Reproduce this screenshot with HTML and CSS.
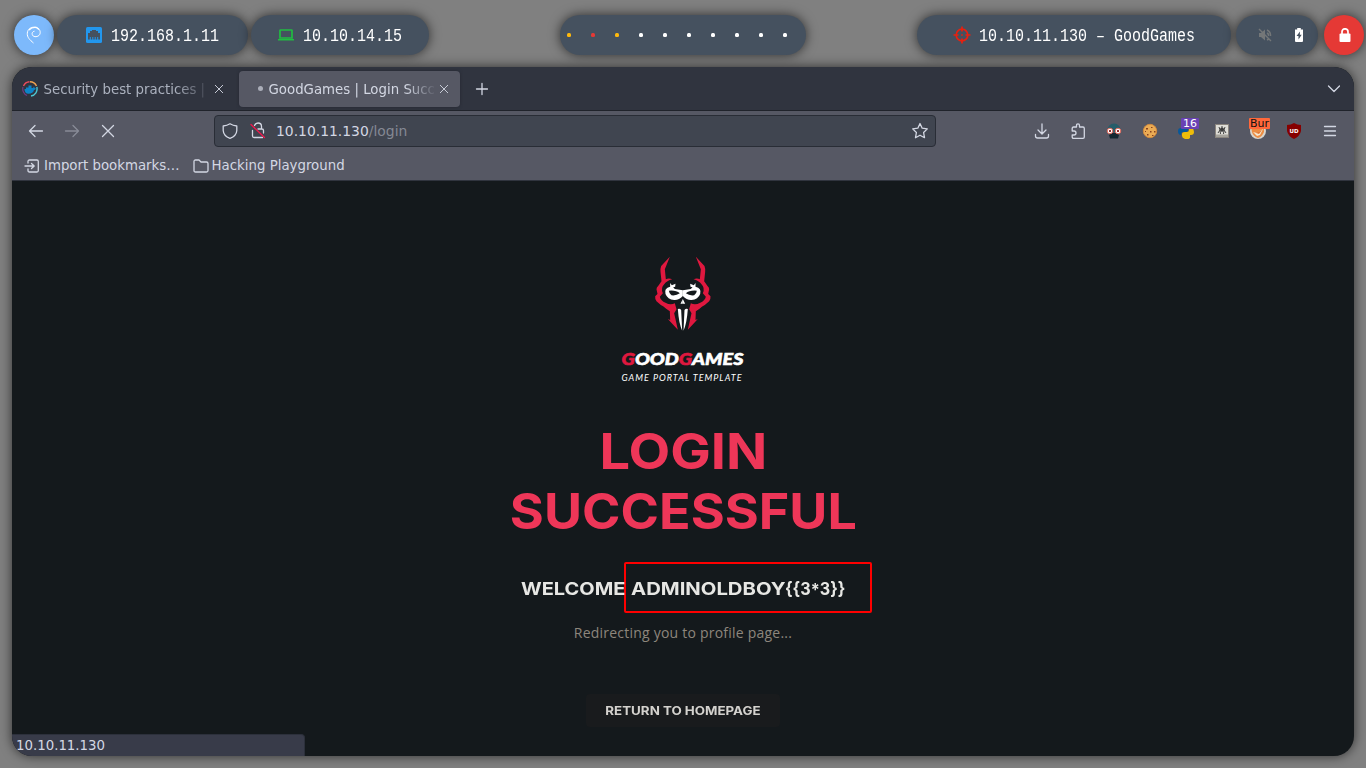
FILE: index.html
```html
<!DOCTYPE html>
<html lang="en">
<head>
<meta charset="utf-8">
<title>GoodGames | Login Successful</title>
<link rel="stylesheet" href="styles.css">
</head>
<body>
<header class="bar">
  <div class="pill debian"><svg width="16" height="18" viewBox="0 0 16 18" fill="none" stroke="#fff"><path d="M7.500 17C4 14 1 11.500 1.300 7.200C1.600 3 5 1 8.300 1.200C12.500 1.200 15 4.500 14 7.800C13.300 10.500 9.200 11.500 7.200 10C5.300 8.300 6 5.500 8.500 5.200" stroke-width="1"/><path d="M3 4Q6 .8 10.500 1.500L13 3.500" stroke-width="1.300"/></svg></div>
  <div class="pill lan"><svg width="16" height="16" viewBox="0 0 16 16"><rect width="16" height="16" rx="1.500" fill="#2297ee"/><path d="M2 12.500V6H4V4H6V3H10V4H12V6H14V12.500H12.200V10H11.200V12.500H9.700V10H8.700V12.500H7.300V10H6.300V12.500H4.800V10H3.800V12.500Z" fill="#45515f"/></svg><span class="mono">192.168.1.11</span></div>
  <div class="pill vpn"><svg width="16" height="12" viewBox="0 0 16 12"><path d="M2 9V1.500Q2 1 2.500 1H13.500Q14 1 14 1.500V9Z" fill="none" stroke="#20bd41" stroke-width="1.700"/><path d="M0 10H16V11.500H0Z" fill="#20bd41"/></svg><span class="mono">10.10.14.15</span></div>
  <div class="pill spaces"><i class="y"></i><i class="r"></i><i class="y"></i><i></i><i></i><i></i><i></i><i></i><i></i><i></i></div>
  <div class="pill goal"><svg width="18" height="18" viewBox="0 0 18 18" fill="none" stroke="#e8200f" stroke-width="1.700"><circle cx="9" cy="9" r="5.800"/><path d="M9 .5V5.500M9 12.500V17.500M.5 9H5.500M12.500 9H17.500M8.200 9H9.800"/></svg><span class="mono">10.10.11.130 – GoodGames</span></div>
  <div class="pill power"><svg width="14" height="14" viewBox="0 0 14 14"><path d="M1 5H3L7 1.500V12.500L3 9H1Z" fill="#747778"/><path d="M1 1L13 13M9 2Q13 4 12.500 8M9 5Q11 6 10.500 8M9 12L11 11" stroke="#747778" stroke-width="1.400" fill="none"/></svg><svg width="8" height="14" viewBox="0 0 8 14"><path d="M0 1.500H2.200V0H5.800V1.500H8V13Q8 14 7 14H1Q0 14 0 13Z" fill="#fff"/><path d="M5 3.500L1.500 8H3.500V11.500L6.700 6.800H4.800Z" fill="#45515f"/></svg></div>
  <div class="pill lock"><svg width="12" height="14" viewBox="0 0 12 14"><rect y="5.500" x=".5" width="11" height="8.500" rx="1" fill="#fff"/><path d="M3 6V3.800a3 3 0 0 1 6 0V6" fill="none" stroke="#fff" stroke-width="1.700"/></svg></div>
</header>
<main class="window">
  <div class="tabs">
    <div class="tab first">
      <svg width="16" height="16" viewBox="0 0 16 16" fill="none"><path d="M5 14.500A7.200 7.200 0 0 1 1 6" stroke="#703a80" stroke-width="1.200"/><path d="M1.500 5A7.200 7.200 0 0 1 7.500 .8" stroke="#ed4c5c" stroke-width="1.400"/><path d="M8 .8A7.200 7.200 0 0 1 14.500 5" stroke="#efa150" stroke-width="1.400"/><path d="M14.800 6A7.200 7.200 0 0 1 9 15" stroke="#4dc7d3" stroke-width="1.400"/><path d="M2.500 8H4V6.500H6.500V4.500H9.500V7H11L12 5.500L12.700 7L14 7.500Q13 9 12 9Q11 12.800 6.500 12.800Q2.500 12.500 2.500 8Z" fill="#0c84c8"/></svg>
      <span class="label">Security best practices |</span><svg class="x" viewBox="0 0 10 10"><path d="M1 1L9 9M9 1L1 9"/></svg>
    </div>
    <div class="tab active"><i class="dot"></i><span class="label">GoodGames | Login Succ</span><svg class="x" viewBox="0 0 10 10"><path d="M1 1L9 9M9 1L1 9"/></svg></div>
    <svg class="line plus" width="14" height="14" viewBox="0 0 14 14"><path d="M7 1.500V12.500M1.500 7H12.500"/></svg>
    <svg class="line chevron" width="14" height="8" viewBox="0 0 14 8"><path d="M1.500 1L7 6.500L12.500 1"/></svg>
  </div>
  <div class="tools">
    <svg class="line back" width="16" height="14" viewBox="0 0 16 14"><path d="M14.500 7H1.500M7 1.500L1.500 7L7 12.500"/></svg>
    <svg class="line fwd" width="16" height="14" viewBox="0 0 16 14"><path d="M1.500 7H14.500M9 1.500L14.500 7L9 12.500"/></svg>
    <svg class="line stop" width="14" height="14" viewBox="0 0 14 14"><path d="M1.500 1.500L12.500 12.500M12.500 1.500L1.500 12.500"/></svg>
    <div class="url">
      <svg class="line" width="16" height="16" viewBox="0 0 16 16"><path d="M8 .8Q11 2.700 14.800 3V7.500Q14.500 13 8 15.300Q1.500 13 1.200 7.500V3Q5 2.700 8 .8Z"/></svg>
      <svg class="line insecure" width="16" height="17" viewBox="0 0 16 17"><path d="M4.500 3.500Q5.500 1 8 1Q11.500 1 11.500 4.500V7M8 7H12Q13.500 7 13.500 8.500V11M2.500 8.500V14Q2.500 15.500 4 15.500H12.500"/><path d="M1 2.500L14.500 15.500" stroke="#f4154b"/></svg>
      <span class="addr">10.10.11.130<span>/login</span></span>
      <svg class="line star" width="18" height="18" viewBox="0 0 18 18"><path d="M9 1.500L11.200 6.200L16.300 6.900L12.600 10.500L13.500 15.700L9 13.200L4.500 15.700L5.400 10.500L1.700 6.900L6.800 6.200Z"/></svg>
    </div>
    <div class="ext">
      <svg class="line" viewBox="0 0 16 16"><path d="M8 1V10.500M4 7L8 11L12 7M1.500 11.500V13Q1.500 15 3.500 15H12.500Q14.500 15 14.500 13V11.500"/></svg>
      <svg class="line" viewBox="0 0 16 16"><path d="M6.500 4V2.500Q6.500 .8 8 .8Q9.500 .8 9.500 2.500V4H13Q14.300 4 14.300 5.500V14Q14.300 15.300 13 15.300H3.500Q2.200 15.300 2.200 14V12H4Q6 12 6 10T4 8H2.200V5.500Q2.200 4 3.500 4Z"/></svg>
      <svg viewBox="0 0 16 16"><path d="M1.500 7Q2 1 8 .5Q14 1 14.500 7V9H2Z" fill="#265d6a"/><path d="M3 12L6 10H10L13 12L12 15.500H4Z" fill="#132832"/><circle cx="4" cy="8" r="2.800" fill="#fff" stroke="#df6758"/><circle cx="12" cy="8" r="2.800" fill="#fff" stroke="#df6758"/><path d="M3 7H5V9H3ZM11 7H13V9H11Z" fill="#8e3033"/></svg>
      <svg viewBox="0 0 16 16"><circle cx="8" cy="8" r="6.700" fill="#eaab54" stroke="#d18a3e"/><path d="M4 5H6V6.500H4ZM9 4H10.500V5H9ZM8 8H9.500V9.500H8ZM12 8H13.500V9.500H12ZM5 11H6.500V12.500H5ZM3 8H4V9H3ZM10 12H11.500V13H10Z" fill="#874220"/></svg>
      <div class="badge-box"><svg viewBox="0 0 16 16"><path d="M6 3H10V7Q10 9 8 9H5Q3 9 3 12Q0 12 0 8Q0 5 3 5H6Z" fill="#07589a"/><path d="M11 5H14Q16 6 16 9Q16 12 13 12H12V15Q10 17 7 16Q4 15 4 13V11Q4 9 7 9H9Q11 9 11 7Z" fill="#efbd0a"/></svg><b class="purple">16</b></div>
      <svg viewBox="0 0 16 16"><rect x="1.500" y="1.500" width="13" height="13" fill="#deddd7" stroke="#89847e"/><path d="M2 11.500H14V14H2Z" fill="#a5a39c"/><circle cx="8" cy="6.500" r="2" fill="#333"/><path d="M8 3V9M5 4L6 7L4 10M11 4L10 7L12 10M6 7L6.500 11M10 7L9.500 11" fill="none" stroke="#444"/></svg>
      <div class="badge-box"><svg viewBox="0 0 16 16"><circle cx="8" cy="8" r="8" fill="#d9d5cc"/><path d="M1 4L5 6L14 3V9Q12 14 8 15Q3 13 2 9Z" fill="#ec8d43"/><path d="M3 9L7 10L13 6L10 12L7 13Z" fill="#f6e6ce"/><path d="M6 10L12 7L9 11Z" fill="#e47935"/></svg><b class="orange">Bur</b></div>
      <svg viewBox="0 0 16 16"><path d="M8 0Q11 2 15 2V8Q14 13 8 16Q2 13 1 8V2Q5 2 8 0Z" fill="#860000"/><text x="8" y="9.800" class="ub">UD</text></svg>
      <svg class="line" viewBox="0 0 16 16"><path d="M2.500 3.500H13.500M2.500 8H13.500M2.500 12.500H13.500"/></svg>
    </div>
  </div>
  <div class="books">
    <svg class="line" width="16" height="14" viewBox="0 0 16 14"><path d="M4 4V2.500Q4 1 5.500 1H13Q14.300 1 14.300 2.500V11.500Q14.300 13 13 13H5.500Q4 13 4 11.500V10M1 7H10M7.500 4.500L10.200 7L7.500 9.500"/></svg><span class="imp">Import bookmarks…</span>
    <svg class="line folder" width="16" height="14" viewBox="0 0 16 14"><path d="M1 2.500Q1 1 2.500 1H6L8 3H13.500Q15 3 15 4.500V11.500Q15 13 13.500 13H2.500Q1 13 1 11.500Z"/></svg><span>Hacking Playground</span>
  </div>
  <section class="page">
    <svg class="logo" width="124" height="130" viewBox="0 0 124 130">
      <defs><g id="half"><path d="M73 20L47 48Q44 56 45 65L48 94L38 108Q33 112 33 118L36 132L29 139Q28 148 33 154L46 165Q54 168 62 176L73 184L74 210L67 207L97 239L86 190L93 178L88 160Q74 166 60 158Q46 152 43 140L52 130Q45 114 56 103Q64 92 80 88Q70 83 61 88L58 58Z" fill="#e0183f"/><path d="M74 99L79 106L90 101L89 110L83 112L88 117L112 121V138Q100 151 86 150Q66 148 60 132Q55 114 74 110Z" fill="#fff"/><path d="M70 122Q92 120 103 130Q92 138 78 136Q71 131 70 122Z" fill="#14191c"/><path d="M112 147L105 161H112ZM97 177Q103 174 107 180L110 242Q100 220 97 177Z" fill="#fff"/></g></defs>
      <g transform="translate(24.500 -4) scale(.33333)"><use href="#half"/><use href="#half" transform="matrix(-1 0 0 1 224 0)"/></g>
      <text x=".5" y="111" class="brand" textLength="122" lengthAdjust="spacingAndGlyphs"><tspan class="red">G</tspan>OOD<tspan class="red">G</tspan>AMES</text>
      <text x=".5" y="127" class="sub" textLength="120">GAME PORTAL TEMPLATE</text>
    </svg>
    <h1><span class="l1">LOGIN</span><span class="l2">SUCCESSFUL</span></h1>
    <h2><span class="w1">WELCOME</span><span class="box"><span class="w2">ADMINOLDBOY</span><span class="w3">{{3<em>*</em>3}}</span></span></h2>
    <p>Redirecting you to profile page...</p>
    <button><span>RETURN TO HOMEPAGE</span></button>
    <div class="status">10.10.11.130</div>
  </section>
</main>
</body>
</html>
```
FILE: styles.css
```css
*{box-sizing:border-box}
body{margin:0;width:1366px;height:768px;overflow:hidden;background:#808080;font-family:"DejaVu Sans",sans-serif;font-size:13.333px;color:#d3d7e3}
svg{flex:none;display:block}
.bar{display:flex;height:67px;padding:15px 2px 12px 14px}
.pill{height:40px;border-radius:20px;background:#45515f;box-shadow:0 0 12px rgba(0,0,0,.65);display:flex;align-items:center;flex:none}
.debian{width:40px;background:#7db9fb;justify-content:center}
.lan{width:191px;margin-left:3px;padding-left:29px}
.vpn{width:178px;margin-left:3px;padding-left:27px}
.mono{font:18px/40px "Liberation Mono",monospace;color:#fff;white-space:pre;transform:scaleX(.8333);transform-origin:left;margin-left:9px;padding-top:2px}
.spaces{width:246px;margin-left:131px;padding-left:7px;gap:20px}
.spaces i{width:4px;height:4px;border-radius:1.500px;background:#fff}
.spaces .y{background:#ffb90c}.spaces .r{background:#e53935}
.goal{width:314px;margin-left:111px;padding-left:36px}
.goal .mono{margin-left:8px}
.power{width:82px;margin-left:5px;padding-left:22px;gap:23px}
.lock{width:40px;margin-left:6px;padding-left:1px;background:#e53935;justify-content:center}
.window{width:1342px;height:689px;margin-left:12px;border-radius:20px;overflow:hidden;display:flex;flex-direction:column;background:#14191c;box-shadow:0 0 12px rgba(0,0,0,.65)}
.line{fill:none;stroke:#d3d7e3;stroke-width:1.300;stroke-linecap:round;stroke-linejoin:round}
.tabs{height:44px;background:#30343f;border-bottom:1px solid #20232b;display:flex;align-items:center;flex:none}
.tab{height:36px;display:flex;align-items:center;border-radius:4px}
.first{width:218px;margin-right:9px;padding-left:10px;color:#abb1be}
.label{margin-left:5.500px;overflow:hidden;white-space:nowrap;line-height:20px;padding-top:2px}
.first .label{width:168px;mask-image:linear-gradient(90deg,#000 78%,transparent)}
.x{width:10px;height:10px;fill:none;stroke:#c6cad5;stroke-width:1}
.first .x{margin-left:2.500px}
.active{width:221px;background:#565864;padding-left:19px;box-shadow:0 0 3px #242730}
.active .label{width:168px;mask-image:linear-gradient(90deg,#000 81%,transparent)}
.active .x{margin-left:2.500px}
.dot{width:5px;height:5px;border-radius:50%;background:#abaeb9;flex:none}
.plus{margin-left:15px}
.chevron{margin-left:auto;margin-right:13px}
.tools{height:39px;background:#565864;display:flex;align-items:center;padding:0 16px;flex:none}
.fwd{margin-left:20px;opacity:.4}.stop{margin-left:21px}
.url{width:722px;height:32px;margin-left:99px;padding:0 6px 0 7px;background:#404550;border:1px solid #292d36;border-radius:4px;display:flex;align-items:center}
.insecure{margin-left:12px}
.addr{font-size:13.900px;margin-left:10px;flex:1}.addr span{color:#858994}
.ext{margin-left:98px;display:flex;gap:20px}
.ext svg{width:16px;height:16px}
.badge-box{position:relative;width:16px}
.badge-box b{position:absolute;left:3px;top:-5px;padding:0 2px;font:11px/11px "DejaVu Sans",sans-serif;border-radius:1px}
.purple{background:#6941b4;color:#fff}
.badge-box .orange{left:-1px;padding:0 1px;background:#ff683b;color:#111}
.ub{font:bold 5.500px "DejaVu Sans",sans-serif;fill:#fff;text-anchor:middle}
.books{height:31px;background:#565864;border-bottom:1px solid #30343e;display:flex;align-items:center;padding:1px 0 0 12px;flex:none}
.books span{margin-left:4px;white-space:nowrap}.books .folder{margin-left:13px}.books .folder+span{margin-left:3px}
.page{position:relative;flex:1;padding-top:73px;display:flex;flex-direction:column;align-items:center;text-align:center}
.brand{font:italic 900 17.500px Lato,sans-serif;fill:#fff;stroke:#fff;stroke-width:.6}.brand .red{fill:#e0183f;stroke:#e0183f}
.sub{font:italic 9px Lato,sans-serif;fill:#fff}
h1{margin:38px 0 0;height:120px;font:700 49px/60px Inter,sans-serif;color:#ee3658;white-space:nowrap}
h1 span,h2 span,button span{display:block;transform-origin:center}
.l1{transform:scaleX(1.105)}
.l2{transform:scaleX(1.062)}
h2{margin:20px 0 0 27px;width:351px;height:51px;display:flex;align-items:center;font:700 17.500px/47px Inter,sans-serif;color:#e7e7e4;white-space:nowrap}
h2 .w1{width:103px;transform:scaleX(1.14);transform-origin:left;text-align:left;padding-top:2px}
h2 .box{width:248px;height:51px;border:2px solid #f00;border-radius:2px;padding:1px 0 0 4.500px;display:flex}
h2 .w2{width:154.500px;transform:scaleX(1.158);transform-origin:left;text-align:left}
h2 .w3{transform:scaleX(.925);transform-origin:left}
h2 em{font-style:normal;display:inline-block;line-height:1;transform:translateY(1px)}
p{margin:10px 0 0;font:14px/20px "Open Sans",sans-serif;letter-spacing:.22px;color:#8d867c}
button{margin:51px 0 0;width:194px;height:33px;padding:1px 0 0;border:0;border-radius:4px;background:#191b1d;color:#d4d2ce;font:700 11.800px/33px Inter,sans-serif;white-space:nowrap}
button span{transform:scaleX(1.13)}
.status{position:absolute;left:0;bottom:0;width:293px;height:22px;background:#383b49;border:1px solid #2c303b;border-left:0;border-bottom:0;border-radius:0 4px 0 0;padding-left:4px;line-height:21px;text-align:left}
```
